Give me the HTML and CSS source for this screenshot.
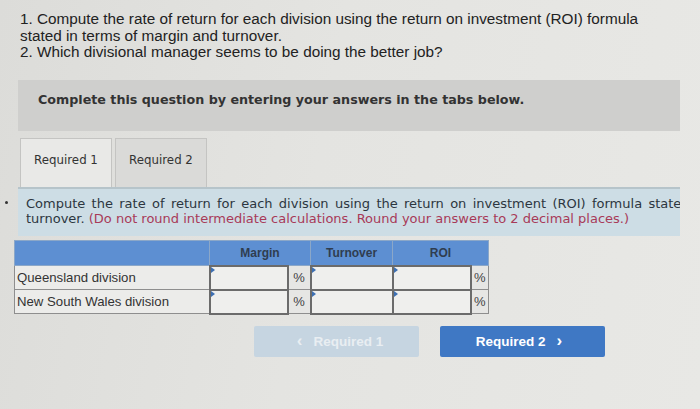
FILE: index.html
```html
<!DOCTYPE html>
<html lang="en">
<head>
  <meta charset="UTF-8" />
  <title>Return on investment</title>
  <link rel="stylesheet" href="styles.css">
</head>
<body>
  <div class="question">
    <p>1. Compute the rate of return for each division using the return on investment (ROI) formula<br>
    stated in terms of margin and turnover.<br>
    2. Which divisional manager seems to be doing the better job?</p>
  </div>

  <div class="notice">Complete this question by entering your answers in the tabs below.</div>

  <div class="tabs">
    <div class="tab active">Required 1</div>
    <div class="tab">Required 2</div>
  </div>

  <div class="instructions">
    <div class="line first">Compute the rate of return for each division using the return on investment (ROI) formula stated in terms of margin and</div>
    <div class="line">turnover. <span class="hint">(Do not round intermediate calculations. Round your answers to 2 decimal places.)</span></div>
  </div>

  <table class="answers">
    <colgroup>
      <col class="c-label">
      <col class="c-margin">
      <col class="c-pct1">
      <col class="c-turn">
      <col class="c-roi">
      <col class="c-pct2">
    </colgroup>
    <tr class="head">
      <th></th>
      <th colspan="2">Margin</th>
      <th>Turnover</th>
      <th colspan="2">ROI</th>
    </tr>
    <tr>
      <td class="label">Queensland division</td>
      <td class="input"></td>
      <td class="pct">%</td>
      <td class="input"></td>
      <td class="input"></td>
      <td class="pct">%</td>
    </tr>
    <tr>
      <td class="label">New South Wales division</td>
      <td class="input"></td>
      <td class="pct">%</td>
      <td class="input"></td>
      <td class="input"></td>
      <td class="pct">%</td>
    </tr>
  </table>

  <div class="nav">
    <div class="btn prev"><span class="chev">&lsaquo;</span> Required 1</div>
    <div class="btn next">Required 2 <span class="chev">&rsaquo;</span></div>
  </div>
</body>
</html>
```

FILE: styles.css
```css
html, body {
  margin: 0;
  padding: 0;
  background: linear-gradient(100deg, #dcdcd9, #e4e4e1 45%, #e8e8e5);
  color: #2b2b2b;
  font-family: 'Liberation Sans', Arial, sans-serif;
}

body {
  width: 700px;
  height: 409px;
  overflow: hidden;
}

.question p {
  margin: 0;
  padding: 11px 0 0 20px;
  font-size: 15.3px;
  line-height: 16.5px;
  color: #222;
}

.notice {
  margin: 19px 20px 0 18px;
  height: 51px;
  background-color: #cfcfcd;
  font-family: 'DejaVu Sans', Verdana, sans-serif;
  font-weight: bold;
  font-size: 12.7px;
  color: #333;
  padding: 12px 0 0 20px;
  box-sizing: border-box;
}

.tabs {
  display: flex;
  gap: 3px;
  margin: 7px 0 0 20px;
}

.tab {
  width: 92px;
  height: 49px;
  box-sizing: border-box;
  border: 1px solid #c4c4c2;
  border-bottom: none;
  background-color: #dadad8;
  font-family: 'DejaVu Sans', Verdana, sans-serif;
  font-size: 11.8px;
  color: #333;
  display: flex;
  align-items: center;
  justify-content: center;
  padding-bottom: 5px;
}

.tab.active {
  background-color: #e9e9e7;
}

.instructions {
  position: relative;
  margin: 0 20px 0 18px;
  height: 49px;
  box-sizing: border-box;
  padding: 7px 0 0 8px;
  background-color: #cddde5;
  border-top: 2px solid #b6c4ca;
  font-family: 'DejaVu Sans', Verdana, sans-serif;
  font-size: 13px;
  line-height: 15px;
  color: #2c3640;
}

.instructions::before {
  content: "";
  position: absolute;
  left: -13px;
  top: 12px;
  width: 3px;
  height: 3px;
  border-radius: 50%;
  background-color: #333;
}

.instructions .line {
  white-space: nowrap;
  overflow: hidden;
}

.instructions .first {
  word-spacing: 2.2px;
}

.hint {
  color: #a83a58;
}

.answers {
  margin: 4px 0 0 14px;
  border-collapse: collapse;
  table-layout: fixed;
  width: 474px;
  font-size: 13.2px;
}

.c-label { width: 195px; }
.c-margin { width: 78px; }
.c-pct1 { width: 23px; }
.c-turn { width: 82px; }
.c-roi { width: 78px; }
.c-pct2 { width: 18px; }

.answers th {
  background-color: #5d8fd2;
  color: #2f3d50;
  font-weight: bold;
  font-size: 12px;
  height: 24px;
  padding: 0;
  border: 1px solid #8ba7c8;
}

.answers td {
  height: 22px;
  padding: 0;
  border: 1px solid #8e8e8e;
  background-color: #ececea;
}

.answers .label {
  text-align: left;
  padding-left: 2px;
  color: #333;
}

.answers .input {
  position: relative;
  border: 2px solid #6b6b6b;
  background-color: #efefed;
}

.answers .input::before {
  content: "";
  position: absolute;
  left: 0;
  top: 0;
  border-left: 4px solid #3d6fb2;
  border-top: 3px solid transparent;
  border-bottom: 3px solid transparent;
}

.answers .pct {
  text-align: center;
  font-size: 13px;
  color: #444;
  background-color: #e6e6e4;
}

.nav {
  display: flex;
  gap: 21px;
  margin: 11px 0 0 254px;
}

.btn {
  width: 165px;
  height: 31px;
  border-radius: 2px;
  display: flex;
  align-items: center;
  justify-content: center;
  font-weight: bold;
  font-size: 13.5px;
  gap: 4px;
}

.btn .chev {
  font-size: 17px;
  margin: 0 7px;
}

.btn.prev {
  background-color: #c6d5e1;
  color: #e9eef2;
}

.btn.next {
  background-color: #3f78c4;
  color: #fff;
}
```
